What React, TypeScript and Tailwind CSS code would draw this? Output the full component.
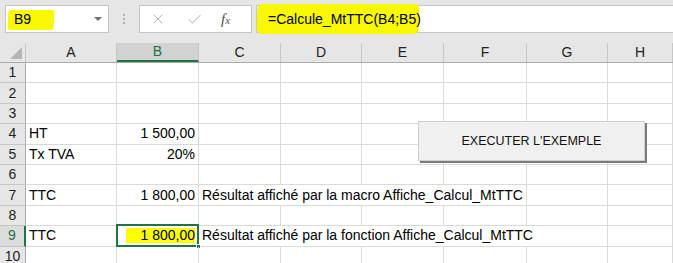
import { X, Check } from 'lucide-react';

const COLS = ['A', 'B', 'C', 'D', 'E', 'F', 'G', 'H'];
const WIDTHS = [91, 82, 82, 81, 82, 83, 81, 65];

type Row = { n: number; a?: string; b?: string; c?: string; span?: number; sel?: boolean };

const ROWS: Row[] = [
  { n: 1 },
  { n: 2 },
  { n: 3 },
  { n: 4, a: 'HT', b: '1 500,00' },
  { n: 5, a: 'Tx TVA', b: '20%' },
  { n: 6 },
  { n: 7, a: 'TTC', b: '1 800,00', c: 'Résultat affiché par la macro Affiche_Calcul_MtTTC', span: 4 },
  { n: 8 },
  { n: 9, a: 'TTC', b: '1 800,00', c: 'Résultat affiché par la fonction Affiche_Calcul_MtTTC', span: 5, sel: true },
  { n: 10 },
];

export default function App() {
  return (
    <div className="relative w-[673px] h-[263px] overflow-hidden bg-white text-[#000] font-['Liberation_Sans',sans-serif] text-[14px]">
      {/* Formula bar */}
      <div className="h-[43px] bg-[#e6e6e6] flex items-start pt-[5px] pl-[5px]">
        <div className="relative w-[104px] h-[28px] bg-white border border-[#c6c6c6] flex items-center">
          <div className="absolute left-[2px] top-[4px] w-[46px] h-[20px] bg-[#f8f800] rounded-[3px] -skew-x-3" />
          <span className="relative pl-[8px] text-[14px]">B9</span>
          <span className="absolute right-[6px] top-[11px] w-0 h-0 border-l-[4px] border-r-[4px] border-t-[4px] border-l-transparent border-r-transparent border-t-[#707070]" />
        </div>
        <div className="w-[30px] h-[28px] flex flex-col items-center justify-center gap-[2px]">
          <span className="w-[2px] h-[2px] bg-[#b0b0b0]" />
          <span className="w-[2px] h-[2px] bg-[#b0b0b0]" />
          <span className="w-[2px] h-[2px] bg-[#b0b0b0]" />
        </div>
        <div className="w-[113px] h-[28px] bg-white border border-[#c6c6c6] flex items-center">
          <X size={16} strokeWidth={1.3} className="ml-[10px] text-[#a8a8a8]" />
          <Check size={17} strokeWidth={1.3} className="ml-[20px] text-[#a8a8a8]" />
          <span className="ml-[18px] italic font-['Liberation_Serif',serif] text-[15px] text-[#505050]">
            f<span className="text-[11px]">x</span>
          </span>
        </div>
        <div className="relative ml-[4px] flex-1 h-[28px] bg-white border border-[#c6c6c6] border-r-0 flex items-center">
          <div className="absolute left-[0px] top-[-2px] w-[162px] h-[30px] bg-[#f8f800] rounded-[5px] -skew-x-2" />
          <span className="relative pl-[11px] text-[14px]">=Calcule_MtTTC(B4;B5)</span>
        </div>
      </div>

      {/* Column headers */}
      <div className="flex h-[20px] bg-[#e6e6e6] border-b border-[#ababab]">
        <div className="relative w-[26px] border-r border-[#c6c6c6]">
          <span className="absolute right-[3px] bottom-[3px] w-0 h-0 border-b-[12px] border-l-[12px] border-b-[#b5b5b5] border-l-transparent" />
        </div>
        {COLS.map((c, i) => (
          <div
            key={c}
            style={{ width: WIDTHS[i] }}
            className={`shrink-0 flex items-center justify-center border-r border-[#c6c6c6] ${
              c === 'B' ? 'bg-[#d2d2d2] text-[#217346] border-b-2 border-b-[#217346]' : 'text-[#222]'
            }`}
          >
            {c}
          </div>
        ))}
      </div>

      {/* Rows */}
      {ROWS.map((r) => (
        <div key={r.n} className="flex h-[20.4px]">
          <div
            className={`w-[26px] shrink-0 flex items-center justify-center border-b border-[#c6c6c6] ${
              r.sel ? 'border-r-2 border-r-[#217346] text-[#217346] bg-[#dcdcdc]' : 'bg-[#e6e6e6] border-r border-r-[#ababab] text-[#222]'
            }`}
          >
            {r.n}
          </div>
          <div style={{ width: WIDTHS[0] }} className="shrink-0 pl-[3px] flex items-center border-r border-b border-[#dadada]">
            {r.a}
          </div>
          <div
            style={{ width: WIDTHS[1] }}
            className="relative shrink-0 pr-[3px] flex items-center justify-end border-r border-b border-[#dadada]"
          >
            {r.sel && (
              <>
                <div className="absolute left-[9px] right-[3px] top-[2px] bottom-[3px] bg-[#ffff00]" />
                <div className="absolute -left-[1px] -right-[1px] -top-[2px] -bottom-[1px] border-2 border-[#217346]" />
                <div className="absolute -right-[3px] -bottom-[3px] w-[5px] h-[5px] bg-[#217346] border border-white" />
              </>
            )}
            <span className="relative">{r.b}</span>
          </div>
          {r.span ? (
            <>
              <div
                style={{ width: WIDTHS.slice(2, 2 + r.span).reduce((s, w) => s + w, 0) }}
                className="shrink-0 pl-[3px] flex items-center whitespace-nowrap border-r border-b border-[#dadada]"
              >
                {r.c}
              </div>
              {WIDTHS.slice(2 + r.span).map((w, i) => (
                <div key={i} style={{ width: w }} className="shrink-0 border-r border-b border-[#dadada]" />
              ))}
            </>
          ) : (
            WIDTHS.slice(2).map((w, i) => (
              <div key={i} style={{ width: w }} className="shrink-0 border-r border-b border-[#dadada]" />
            ))
          )}
        </div>
      ))}

      {/* Macro button shape */}
      <div className="absolute left-[418px] top-[121px] w-[227px] h-[40px] bg-[#f0f0f0] border border-[#d0d0d0] shadow-[2px_2px_0_#7a7a7a] flex items-center justify-center text-[12.5px] text-[#111]">
        EXECUTER L'EXEMPLE
      </div>
    </div>
  );
}
